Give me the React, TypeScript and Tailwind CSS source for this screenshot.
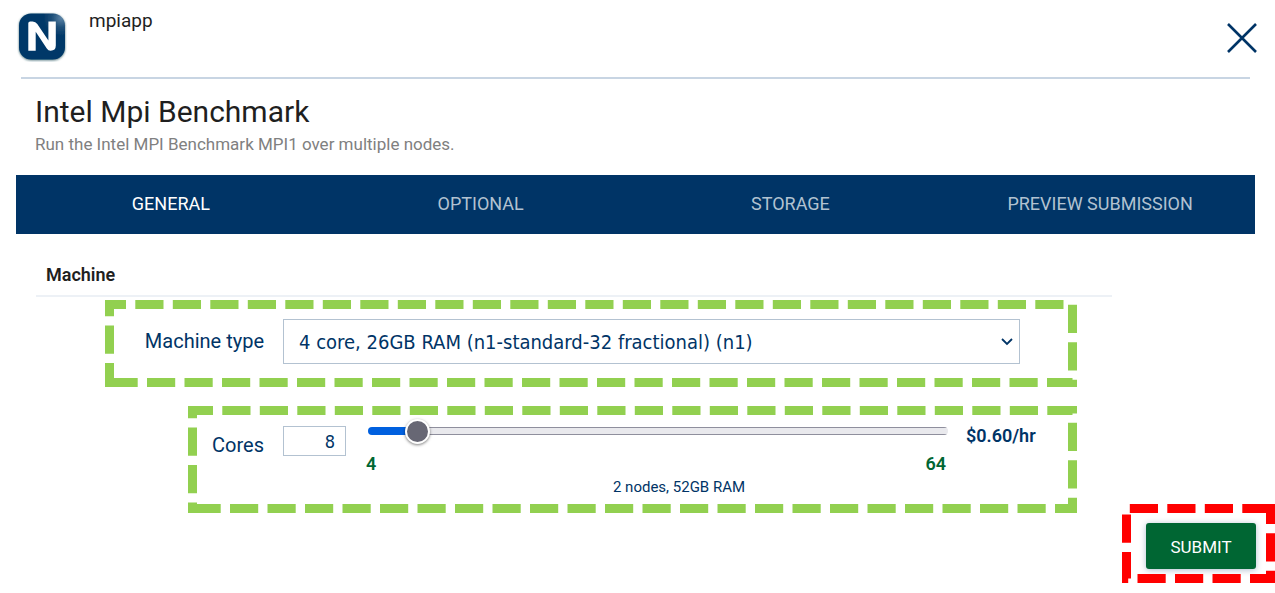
import { useState } from "react";
import type { CSSProperties } from "react";

const TABS = ["General", "Optional", "Storage", "Preview submission"];
const MACHINES = ["4 core, 26GB RAM (n1-standard-32 fractional) (n1)"];
const MIN_CORES = 4;
const MAX_CORES = 64;

function DashedFrame({ className }: { className: string }) {
  return (
    <svg
      aria-hidden="true"
      className={`pointer-events-none absolute inset-0 size-full overflow-visible ${className}`}
    >
      <rect
        x="4.5"
        y="4.5"
        fill="none"
        stroke="currentColor"
        strokeWidth="9"
        strokeDasharray="28.2 9.3"
        className="h-[calc(100%-9px)] w-[calc(100%-9px)]"
      />
    </svg>
  );
}

function Logo() {
  return (
    <svg viewBox="0 0 50 50" className="size-[50px]" role="img" aria-label="N">
      <defs>
        <radialGradient id="shine" cx="0.92" cy="0.1" r="0.4">
          <stop offset="0" stopColor="#5b83a6" />
          <stop offset="0.5" stopColor="#1f5079" />
          <stop offset="1" stopColor="#003767" />
        </radialGradient>
        <filter id="soft" x="-10%" y="-10%" width="120%" height="125%">
          <feDropShadow dx="0" dy="0.8" stdDeviation="0.9" floodColor="#1d4a55" floodOpacity="0.8" />
        </filter>
      </defs>
      <rect x="2" y="1.5" width="46" height="46" rx="12" fill="url(#shine)" filter="url(#soft)" />
      <path
        d="M11.3 38.8V11.3Q11.3 9.4 13.2 9.4H15.6Q18.6 9.4 20.3 12L31.4 28.6V9.4H38.8V33.6Q38.8 38.8 33.6 38.8Q31.2 38.8 29.8 36.6L18.7 19.8V38.8Z"
        fill="#fff"
      />
    </svg>
  );
}

export default function App() {
  const [tab, setTab] = useState(0);
  const [cores, setCores] = useState(8);
  const percent = ((cores - MIN_CORES) / (MAX_CORES - MIN_CORES)) * 100;

  return (
    <div className="bg-white font-[Roboto,sans-serif] text-[#1f1f1f]">
      <header className="mr-[25px] ml-[21px] flex h-[79px] items-start border-b-2 border-[#c8d5e3]">
        <div className="-ml-1 pt-3">
          <Logo />
        </div>
        <p className="ml-[22px] flex-1 pt-[9px] text-[19px] leading-6">mpiapp</p>
        <button type="button" aria-label="Close" className="-mr-2 pt-[22px] text-[#003466]">
          <svg viewBox="0 0 32 32" className="size-8" fill="none" stroke="currentColor" strokeWidth="2.6">
            <path d="M2 2L30 30M30 2L2 30" />
          </svg>
        </button>
      </header>

      <div className="pt-[13px] pr-9 pl-[35px]">
        <h1 className="text-[30px] leading-10">Intel Mpi Benchmark</h1>
        <p className="text-[17px] leading-6 text-[#808080]">
          Run the Intel MPI Benchmark MPI1 over multiple nodes.
        </p>
      </div>

      <nav role="tablist" className="mt-[19px] mr-5 ml-4 grid h-[59px] grid-cols-4 bg-[#003466]">
        {TABS.map((name, i) => (
          <button
            key={name}
            type="button"
            role="tab"
            aria-selected={i === tab}
            onClick={() => setTab(i)}
            className={`pb-[2px] text-[18px] uppercase ${i === tab ? "text-white" : "text-[#b2c2d1]"}`}
          >
            {name}
          </button>
        ))}
      </nav>

      <h2 className="mr-[163px] ml-9 border-b-2 border-[#edf1f6] px-[10px] pt-7 pb-2 text-[18px] leading-[25px] font-semibold">
        Machine
      </h2>

      <div className="relative mt-[3px] mr-[198px] ml-[105px] flex items-center gap-[19px] pt-[19px] pr-[57px] pb-[23px]">
        <DashedFrame className="-scale-y-100 text-[#92d050]" />
        <label htmlFor="machine" className="w-[159px] pb-[2px] text-right text-[20px] text-[#003466]">
          Machine type
        </label>
        <div className="relative flex-1">
          <select
            id="machine"
            className="h-[45px] w-full appearance-none border border-[#b3c2d1] bg-white pl-[15px] font-['DejaVu_Sans_Condensed','Noto_Sans',sans-serif] text-[20px] text-[#003466]"
          >
            {MACHINES.map((m) => (
              <option key={m}>{m}</option>
            ))}
          </select>
          <svg
            aria-hidden="true"
            viewBox="0 0 12 8"
            className="pointer-events-none absolute top-[19px] right-[7px] h-2 w-3 text-[#003466]"
            fill="none"
            stroke="currentColor"
            strokeWidth="1.8"
          >
            <path d="M1 1L6 6L11 1" />
          </svg>
        </div>
      </div>

      <div className="relative mt-[19px] mr-[198px] ml-[188px] flex items-start gap-[19px] pt-5 pr-[2px] pb-[15px]">
        <DashedFrame className="-scale-y-100 text-[#92d050]" />
        <label htmlFor="cores" className="w-[76px] pt-1 text-right text-[20px] leading-[30px] text-[#003466]">
          Cores
        </label>
        <div className="flex-1 text-[#003466]">
          <div className="flex items-start">
            <input
              id="cores"
              type="text"
              inputMode="numeric"
              value={cores}
              onChange={(e) => setCores(Number(e.target.value) || MIN_CORES)}
              className="h-[30px] w-[63px] border border-[#b3c2d1] pr-[10px] text-right font-['DejaVu_Sans_Condensed','Noto_Sans',sans-serif] text-[18px]"
            />
            <div className="ml-[22px] flex-1">
              <input
                type="range"
                aria-label="Number of cores"
                min={MIN_CORES}
                max={MAX_CORES}
                value={cores}
                onChange={(e) => setCores(Number(e.target.value))}
                style={{ "--fill": `calc(12px + (100% - 25px) * ${percent / 100})` } as CSSProperties}
                className="block h-[10px] w-full appearance-none bg-transparent [&::-webkit-slider-runnable-track]:h-2 [&::-webkit-slider-runnable-track]:rounded-full [&::-webkit-slider-runnable-track]:bg-[linear-gradient(#0060df,#0060df),linear-gradient(#8f8f9d_1px,#e9e9ed_1px,#e9e9ed_7px,#8f8f9d_7px)] [&::-webkit-slider-runnable-track]:bg-[length:var(--fill)_100%,100%_100%] [&::-webkit-slider-runnable-track]:bg-no-repeat [&::-webkit-slider-thumb]:-mt-[8px] [&::-webkit-slider-thumb]:size-[25px] [&::-webkit-slider-thumb]:appearance-none [&::-webkit-slider-thumb]:rounded-full [&::-webkit-slider-thumb]:border-2 [&::-webkit-slider-thumb]:border-white [&::-webkit-slider-thumb]:bg-[#676774] [&::-webkit-slider-thumb]:shadow-[0_1px_3px_#00000080]"
              />
              <div className="-ml-[2px] flex justify-between pt-4 pr-[2px] text-[18px] leading-6 font-semibold text-[#006633]">
                <span>{MIN_CORES}</span>
                <span>{MAX_CORES}</span>
              </div>
            </div>
            <span className="ml-[18px] w-[109px] text-[18px] leading-5 font-semibold">$0.60/hr</span>
          </div>
          <p className="pt-px text-center text-[15px] leading-[21px]">2 nodes, 52GB RAM</p>
        </div>
      </div>

      <div className="-mt-[9px] flex justify-end">
        <div className="relative pt-[19px] pr-[19px] pb-[14px] pl-6">
          <DashedFrame className="-scale-x-100 text-[#ff0000]" />
          <button
            type="button"
            className="h-[46px] w-[110px] rounded-[3px] bg-[#006633] pt-[3px] text-[17px] text-white uppercase shadow-[0_1px_6px_#00346650]"
          >
            Submit
          </button>
        </div>
      </div>
    </div>
  );
}
